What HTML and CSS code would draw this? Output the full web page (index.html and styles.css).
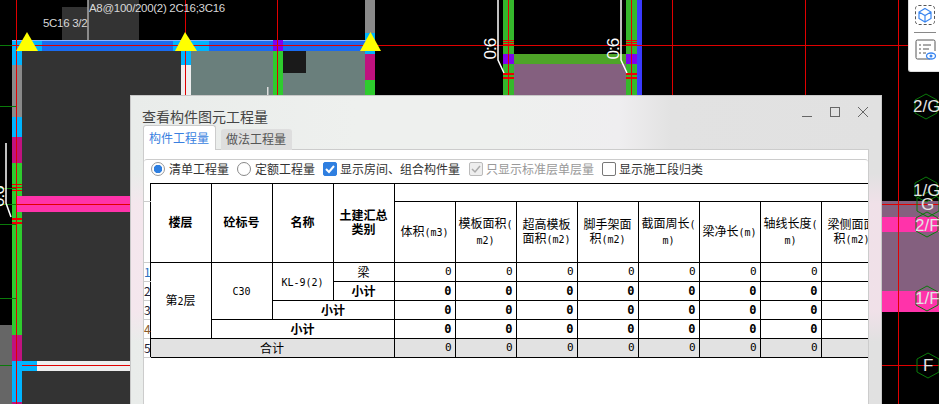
FILE: index.html
```html
<!DOCTYPE html>
<html lang="zh-CN">

<head>
    <meta charset="UTF-8" />
    <meta name="viewport" content="width=device-width, initial-scale=1.0" />
    <title>查看构件图元工程量</title>
    <link rel="stylesheet" href="styles.css">
</head>

<body>
    <!-- cad drawing behind the dialog -->
    <svg class="cad" width="939" height="404" viewBox="0 0 939 404">
        <rect x="62" y="7" width="26" height="33" fill="#333" />
        <rect x="88" y="0" width="51" height="40" fill="#333" />
        <line x1="88" y1="0" x2="88" y2="40" stroke="#aaa" stroke-width="1.5" />

        <rect x="22" y="51" width="159" height="310" fill="#333" />
        <rect x="22" y="371" width="159" height="33" fill="#333" />
        <rect x="0" y="325" width="12" height="79" fill="#666" />
        <rect x="191" y="51" width="174" height="50" fill="#6a7f7c" />
        <rect x="283" y="51" width="23" height="22" fill="#1a1a1a" />

        <!-- left column -->
        <rect x="12" y="40" width="10" height="25" fill="#00b4ff" />
        <rect x="12" y="65" width="10" height="52" fill="#8a8a8a" />
        <rect x="12" y="117" width="10" height="20" fill="#00b4ff" />
        <rect x="12" y="137" width="10" height="26" fill="#c0127f" />
        <rect x="12" y="163" width="10" height="172" fill="#2ecc2e" />
        <rect x="12" y="335" width="10" height="26" fill="#c0127f" />
        <rect x="12" y="361" width="10" height="41" fill="#00b4ff" />
        <rect x="12" y="402" width="10" height="2" fill="#c0127f" />

        <!-- beams -->
        <rect x="17" y="196" width="120" height="16" fill="#ff33aa" />
        <rect x="22" y="361" width="110" height="10" fill="#eee" />
        <rect x="22" y="361" width="15" height="10" fill="#00b4ff" />

        <rect x="181" y="51" width="10" height="14" fill="#00b4ff" />
        <rect x="181" y="65" width="10" height="36" fill="#eee" />
        <rect x="273" y="51" width="10" height="50" fill="#2ecc2e" />
        <rect x="267" y="87" width="1.5" height="12" fill="#ddd" />
        <rect x="365" y="0" width="10" height="33" fill="#8a8a8a" />
        <rect x="365" y="33" width="10" height="21" fill="#00b4ff" />
        <rect x="365" y="54" width="10" height="26" fill="#c0127f" />
        <rect x="365" y="80" width="10" height="20" fill="#2ecc2e" />

        <rect x="12" y="40" width="363" height="11" fill="#1a6cf0" />
        <rect x="12" y="40" width="363" height="1" fill="#8cb4ff" />
        <rect x="12" y="41" width="30" height="10" fill="#00b4ff" />
        <rect x="173" y="41" width="36" height="10" fill="#00b4ff" />
        <rect x="273" y="40" width="10" height="11" fill="#8000f0" />

        <!-- middle columns -->
        <rect x="514" y="64" width="112" height="36" fill="#84607f" />
        <rect x="514" y="54" width="112" height="10" fill="#4ea428" />
        <rect x="503" y="0" width="11" height="100" fill="#35b82c" />
        <rect x="626" y="0" width="11" height="100" fill="#35b82c" />
        <rect x="637" y="0" width="5" height="100" fill="#3a3aff" />
        <rect x="503" y="54" width="11" height="10" fill="#8000f0" />
        <rect x="626" y="54" width="11" height="10" fill="#8000f0" />

        <!-- right side floors -->
        <rect x="882" y="201" width="57" height="111" fill="#84607f" />
        <rect x="882" y="217" width="57" height="15" fill="#ff33aa" />
        <rect x="882" y="291" width="57" height="21" fill="#ff33aa" />

        <!-- axis lines -->
        <g stroke="#0a7a0a" stroke-width="1">
            <line x1="0" y1="45.5" x2="12" y2="45.5" />
            <line x1="0" y1="106.5" x2="16" y2="106.5" />
            <line x1="0" y1="188.5" x2="16" y2="188.5" />
            <line x1="0" y1="204.5" x2="16" y2="204.5" />
            <line x1="0" y1="224.5" x2="16" y2="224.5" />
            <line x1="0" y1="298.5" x2="16" y2="298.5" />
            <line x1="0" y1="365.5" x2="12" y2="365.5" />
        </g>
        <g stroke="#e00000" stroke-width="1">
            <line x1="16.5" y1="0" x2="16.5" y2="404" />
            <line x1="185.5" y1="0" x2="185.5" y2="100" />
            <line x1="277.5" y1="0" x2="277.5" y2="100" />
            <line x1="508.5" y1="0" x2="508.5" y2="100" />
            <line x1="631.5" y1="0" x2="631.5" y2="100" />
            <line x1="672.5" y1="0" x2="672.5" y2="100" />
            <line x1="805.5" y1="0" x2="805.5" y2="100" />
            <line x1="898.5" y1="0" x2="898.5" y2="404" />
            <line x1="12" y1="45.5" x2="908" y2="45.5" />
            <line x1="17" y1="204.5" x2="137" y2="204.5" />
            <line x1="22" y1="365.5" x2="132" y2="365.5" />
            <line x1="882" y1="204.5" x2="939" y2="204.5" />
            <line x1="882" y1="365.5" x2="939" y2="365.5" />
        </g>

        <!-- rebar hatches -->
        <g fill="#f00000">
            <rect x="503" y="40" width="11" height="1" />
            <rect x="503" y="42" width="11" height="1" />
            <rect x="503" y="44" width="11" height="1" />
            <rect x="503" y="73" width="11" height="2" />
            <rect x="503" y="77" width="11" height="2" />
            <rect x="626" y="40" width="11" height="1" />
            <rect x="626" y="42" width="11" height="1" />
            <rect x="626" y="44" width="11" height="1" />
            <rect x="626" y="73" width="11" height="2" />
            <rect x="626" y="77" width="11" height="2" />
            <rect x="12" y="184" width="10" height="1" />
            <rect x="12" y="187" width="10" height="1" />
            <rect x="12" y="190" width="10" height="1" />
            <rect x="12" y="218" width="10" height="2" />
            <rect x="12" y="222" width="10" height="2" />
        </g>

        <!-- leader lines -->
        <g fill="none" stroke="#fff" stroke-width="1.5">
            <polyline points="6,143 6,203 11,217" />
            <polyline points="498,0 498,60 504,73" />
            <polyline points="621,0 621,60 627,73" />
        </g>

        <g class="cad-label">
            <text x="89" y="12">A8@100/200(2) 2C16;3C16</text>
            <text x="43" y="27">5C16 3/2</text>
        </g>
        <g class="cad-rotated">
            <text transform="translate(496 59.5) rotate(-90)">0:6</text>
            <text transform="translate(618.5 59.5) rotate(-90)">0:6</text>
            <text transform="translate(4 207) rotate(-90)">0:6</text>
        </g>

        <!-- support markers -->
        <g fill="#ffff00">
            <polygon points="27,32 16,51 38,51" />
            <polygon points="185,32 175,51 197,51" />
            <polygon points="370.5,32 360,51 381,51" />
        </g>

        <!-- axis bubbles -->
        <g fill="none" stroke="#0a7a0a" stroke-width="1">
            <polygon points="926,94 937,100 937,113 926,119 915,113 915,100" />
            <polygon points="926,177 937,183 937,196 926,202 915,196 915,183" />
            <polygon points="928,192 939,198 939,211 928,217 917,211 917,198" />
            <polygon points="927,212 938,218 938,231 927,237 916,231 916,218" />
            <polygon points="927,286 938,292 938,305 927,311 916,305 916,292" />
            <polygon points="928,353 939,359 939,372 928,378 917,372 917,359" />
        </g>
        <g class="cad-axis">
            <text x="913" y="112">2/G</text>
            <text x="913" y="196">1/G</text>
            <text x="921" y="210">G</text>
            <text x="915" y="231">2/F</text>
            <text x="915" y="304">1/F</text>
            <text x="923" y="371">F</text>
        </g>
    </svg>

    <aside class="sidebar">
        <svg width="20" height="20" viewBox="0 0 20 20">
            <rect x="0.5" y="0.5" width="19" height="19" rx="3" fill="none" stroke="#555" stroke-dasharray="3 2" />
            <path d="M10 3.5 16 7v6.5L10 17l-6-3.5V7zM4 7l6 3.5L16 7M10 10.5V17" fill="none" stroke="#3a86f0" stroke-width="1.2" />
        </svg>
        <div class="sidebar-line"></div>
        <svg width="22" height="22" viewBox="0 0 22 22">
            <path d="M15 20H2.5A1.5 1.5 0 0 1 1 18.5V2.500A1.500 1.500 0 0 1 2.500 1h16A1.500 1.500 0 0 1 20 2.500V12" fill="none" stroke="#555" />
            <path d="M4 6h2M8 6h8M4 10h2M8 10h6M4 14h2M8 14h3" stroke="#555" fill="none" />
            <ellipse cx="16" cy="17" rx="4.500" ry="3" fill="none" stroke="#3a86f0" stroke-width="1.300" />
            <circle cx="16" cy="17" r="1.500" fill="#3a86f0" />
        </svg>
    </aside>

    <section class="dialog">
        <header class="titlebar">
            <h1>查看构件图元工程量</h1>
            <div class="winBtns">
                <svg width="10" height="10" viewBox="0 0 10 10"><path d="M0 9.500h10" stroke="#666" /></svg>
                <svg width="10" height="10" viewBox="0 0 10 10"><rect x="0.500" y="0.500" width="9" height="9" fill="none" stroke="#666" /></svg>
                <svg width="10" height="10" viewBox="0 0 10 10"><path d="M0 0l10 10M10 0 0 10" stroke="#666" /></svg>
            </div>
        </header>

        <nav class="tabs">
            <div class="tab active">构件工程量</div>
            <div class="tab">做法工程量</div>
        </nav>

        <div class="pane">
            <div class="group">
                <div class="options">
                    <label class="opt"><span class="radio on"></span>清单工程量</label>
                    <label class="opt"><span class="radio"></span>定额工程量</label>
                    <label class="opt cb"><span class="check on">
                        <svg width="14" height="14" viewBox="0 0 14 14"><path d="M3 7l3 3 5-6" fill="none" stroke="#fff" stroke-width="2" /></svg>
                    </span>显示房间、组合构件量</label>
                    <label class="opt cb off"><span class="check dis">
                        <svg width="14" height="14" viewBox="0 0 14 14"><path d="M3 7l3 3 5-6" fill="none" stroke="#aaa" stroke-width="1.500" /></svg>
                    </span>只显示标准层单层量</label>
                    <label class="opt cb"><span class="check"></span>显示施工段归类</label>
                </div>

                <div class="tableWrap">
                    <table>
                        <colgroup>
                            <col class="rnCol" />
                            <col /><col /><col /><col /><col /><col />
                            <col /><col /><col /><col /><col /><col />
                        </colgroup>
                        <thead>
                            <tr class="topRow">
                                <td class="rn"></td>
                                <th rowspan="2">楼层</th>
                                <th rowspan="2">砼标号</th>
                                <th rowspan="2">名称</th>
                                <th rowspan="2">土建汇总<br />类别</th>
                                <td colspan="8"></td>
                            </tr>
                            <tr class="headRow">
                                <td class="rn"></td>
                                <td>体积<span class="lat">(m3)</span></td>
                                <td>模板面积<span class="lat">(<br />m2)</span></td>
                                <td>超高模板<br />面积<span class="lat">(m2)</span></td>
                                <td>脚手架面<br />积<span class="lat">(m2)</span></td>
                                <td>截面周长<span class="lat">(<br />m)</span></td>
                                <td>梁净长<span class="lat">(m)</span></td>
                                <td>轴线长度<span class="lat">(<br />m)</span></td>
                                <td>梁侧面面<br />积<span class="lat">(m2)</span></td>
                            </tr>
                        </thead>
                        <tbody>
                            <tr>
                                <td class="rn blueNum">1</td>
                                <td rowspan="4">第<span class="lat">2</span>层</td>
                                <td rowspan="3"><span class="lat">C30</span></td>
                                <td rowspan="2"><span class="lat">KL-9(2)</span></td>
                                <td>梁</td>
                                <td class="num">0</td><td class="num">0</td><td class="num">0</td><td class="num">0</td>
                                <td class="num">0</td><td class="num">0</td><td class="num">0</td><td class="num">0</td>
                            </tr>
                            <tr class="strong">
                                <td class="rn">2</td>
                                <td>小计</td>
                                <td class="num">0</td><td class="num">0</td><td class="num">0</td><td class="num">0</td>
                                <td class="num">0</td><td class="num">0</td><td class="num">0</td><td class="num">0</td>
                            </tr>
                            <tr class="strong">
                                <td class="rn">3</td>
                                <td colspan="2">小计</td>
                                <td class="num">0</td><td class="num">0</td><td class="num">0</td><td class="num">0</td>
                                <td class="num">0</td><td class="num">0</td><td class="num">0</td><td class="num">0</td>
                            </tr>
                            <tr class="strong">
                                <td class="rn brownNum">4</td>
                                <td colspan="3">小计</td>
                                <td class="num">0</td><td class="num">0</td><td class="num">0</td><td class="num">0</td>
                                <td class="num">0</td><td class="num">0</td><td class="num">0</td><td class="num">0</td>
                            </tr>
                            <tr class="total">
                                <td class="rn">5</td>
                                <td colspan="4">合计</td>
                                <td class="num">0</td><td class="num">0</td><td class="num">0</td><td class="num">0</td>
                                <td class="num">0</td><td class="num">0</td><td class="num">0</td><td class="num">0</td>
                            </tr>
                        </tbody>
                    </table>
                </div>
            </div>
        </div>
    </section>
</body>

</html>
```

FILE: styles.css
```css
* {
    box-sizing: border-box;
}

html,
body {
    margin: 0;
    height: 100%;
    overflow: hidden;
    background: #000;
    font-family: "Noto Sans CJK SC", "Liberation Sans", sans-serif;
}

.cad {
    position: absolute;
    left: 0;
    top: 0;
    display: block;
}

.cad-label {
    fill: #d8d8d8;
    font-family: "Liberation Sans", sans-serif;
    font-size: 11.5px;
    letter-spacing: -0.3px;
}

.cad-rotated {
    fill: #fff;
    font-family: "Liberation Sans", sans-serif;
    font-size: 17px;
    letter-spacing: -1px;
}

.cad-axis {
    fill: #e4e4e4;
    font-family: "Liberation Sans", sans-serif;
    font-size: 17px;
}

.sidebar {
    position: absolute;
    left: 908px;
    top: 0;
    width: 31px;
    height: 72px;
    padding: 5px 0 0 6px;
    display: flex;
    flex-direction: column;
    background: #fff;
    border-left: 1px solid #ddd;
    border-bottom: 1px solid #ddd;
    border-bottom-left-radius: 3px;
}

.sidebar-line {
    width: 22px;
    height: 1px;
    margin: 7px 0 6px -1px;
    background: #888;
}

/* dialog */
.dialog {
    position: absolute;
    left: 130px;
    top: 95px;
    width: 752px;
    height: 309px;
    padding: 0 12px;
    display: flex;
    flex-direction: column;
    border: 1px solid #c8c8c8;
    border-bottom: 0;
    background:
        linear-gradient(180deg, rgba(255, 255, 255, 0) 25%, rgba(255, 225, 240, 0.5) 35%, rgba(255, 225, 240, 0.5) 70%, rgba(255, 255, 255, 0) 80%),
        linear-gradient(90deg, #e9ecea 0%, #eef0ee 30%, #eef0ee 50%, #efeef0 65%, #e2e2e2 72%, #e1e1e1 100%);
}

.titlebar {
    height: 29px;
    flex: none;
    display: flex;
    align-items: center;
    justify-content: space-between;
    padding-top: 10px;
}

.titlebar h1 {
    margin: 0 0 0 -1px;
    font-size: 14px;
    line-height: 18px;
    font-weight: 400;
    color: #444;
}

.winBtns {
    display: flex;
    gap: 18px;
    margin: -7px 1px 0 0;
}

.tabs {
    height: 25px;
    flex: none;
    display: flex;
    align-items: flex-end;
    gap: 5px;
    margin-bottom: -1px;
    position: relative;
    z-index: 1;
}

.tab {
    width: 71px;
    height: 21px;
    padding-left: 5px;
    font-size: 12px;
    line-height: 20px;
    color: #555;
    background: #dedede;
    border-radius: 3px 3px 0 0;
}

.tab.active {
    width: 73px;
    height: 25px;
    padding-left: 5px;
    line-height: 24px;
    color: #3a7fe0;
    background: #fff;
    border: 1px solid #ccc;
    border-bottom: 0;
}

.pane {
    flex: 1;
    min-height: 0;
    padding-top: 9px;
    background: #fff;
    border: 1px solid #ccc;
    border-bottom: 0;
}

.group {
    height: 100%;
    border-top: 1px solid #ccc;
    border-radius: 3px 3px 0 0;
}

.options {
    height: 23px;
    padding: 1px 0 0 7px;
    display: flex;
    align-items: flex-start;
    font-size: 12px;
    color: #333;
}

.opt {
    display: flex;
    align-items: center;
    gap: 4px;
    margin-right: 8px;
    line-height: 16px;
}

.opt.cb {
    gap: 3px;
}

.opt.cb.off {
    color: #999;
}

.opt:nth-child(3) {
    margin-right: 9px;
}

.radio {
    width: 14px;
    height: 14px;
    border: 1px solid #888;
    border-radius: 50%;
    background: #fff;
}

.radio.on {
    border-color: #999;
    background: radial-gradient(circle, #2f7fe0 0 4px, #fff 4.500px);
}

.check {
    width: 14px;
    height: 14px;
    display: block;
    border: 1px solid #777;
    border-radius: 2px;
    background: #fff;
}

.check svg {
    display: block;
    margin: -1px;
}

.check.on {
    border-color: #2f7fe0;
    background: #2f7fe0;
}

.check.dis {
    border-color: #bbb;
    background: #eee;
}

/* quantity table */
.tableWrap {
    overflow: hidden;
}

table {
    width: 738px;
    table-layout: fixed;
    border-collapse: collapse;
    font-size: 12px;
    line-height: 14px;
    color: #000;
}

col {
    width: 61px;
}

col.rnCol {
    width: 6px;
}

th,
td {
    padding: 0;
    border: 1px solid #000;
    text-align: center;
    vertical-align: middle;
    overflow: hidden;
    white-space: nowrap;
}

.topRow th {
    padding-bottom: 3px;
}

.topRow td,
.topRow th {
    height: 18px;
}

.headRow td {
    height: 61px;
}

tbody td {
    height: 19px;
}

.lat {
    font-family: "DejaVu Sans Mono", monospace;
    font-size: 10px;
}

.num {
    padding-right: 3px;
    text-align: right;
    font-family: "DejaVu Sans Mono", monospace;
    font-size: 11px;
}

.strong td {
    font-weight: 700;
}

.strong .num {
    font-size: 12px;
}

.total td {
    background: #e2e2e2;
}

tbody td.rn,
thead td.rn {
    border: 1px solid #ccc;
    border-left: 0;
    border-right: 1px solid #000;
    overflow: visible;
    text-align: left;
    font-weight: 400;
    color: #223;
    background: #fff;
}

.topRow td.rn {
    border-top: 0;
}

tbody td.blueNum {
    color: #2a6fc0;
}

tbody td.brownNum {
    color: #8a5a2a;
}
```
